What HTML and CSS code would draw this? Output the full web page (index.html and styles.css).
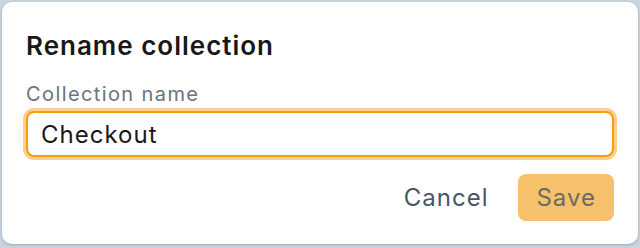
FILE: index.html
```html
<!DOCTYPE html>
<html>
  <head>
    <title>Rename collection</title>
    <meta name="viewport" content="width=device-width, initial-scale=1" />
    <link rel="stylesheet" href="styles.css">
  </head>
  <body>
    <div class="dialog">
      <h2 class="title">Rename collection</h2>
      <label class="label" for="name">Collection name</label>
      <input id="name" class="field" type="text" value="Checkout" />
      <div class="actions">
        <button class="button cancel">Cancel</button>
        <button class="button save" disabled>Save</button>
      </div>
    </div>
  </body>
</html>
```

FILE: styles.css
```css
html {
  font-family: Inter, "Noto Sans", sans-serif;
}
body {
  margin: 0;
  padding: 2px 2px 0 2px;
  height: 248px;
  box-sizing: border-box;
  background-color: #cbd5e1;
}
.dialog {
  background-color: #fff;
  border-radius: 10px;
  box-shadow: 0 1px 3px rgba(71, 85, 105, 0.35);
  padding: 28px 24px 23px 24px;
  height: 242px;
  box-sizing: border-box;
  display: flex;
  flex-direction: column;
}
.title {
  margin: 0;
  font-size: 26px;
  line-height: 32px;
  font-weight: 600;
  letter-spacing: 1px;
  color: #18181b;
}
.label {
  margin-top: 20px;
  font-size: 20px;
  line-height: 24px;
  letter-spacing: 1.4px;
  color: #6b7280;
}
.field {
  margin-top: 5px;
  height: 46px;
  box-sizing: border-box;
  border: 2px solid #f59e0b;
  border-radius: 8px;
  box-shadow: 0 0 0 3px #fcd08c;
  padding: 0 13px;
  font-family: inherit;
  font-size: 24px;
  letter-spacing: 1px;
  color: #18181b;
  outline: none;
}
.actions {
  margin-top: 17px;
  display: flex;
  justify-content: flex-end;
  gap: 12px;
}
.button {
  height: 47px;
  padding: 0 18px;
  border: none;
  border-radius: 8px;
  font-family: inherit;
  font-size: 24px;
  letter-spacing: 1px;
  background: none;
}
.cancel {
  color: #475569;
}
.save {
  background-color: #f7c06b;
  color: #6b6b66;
}
```
